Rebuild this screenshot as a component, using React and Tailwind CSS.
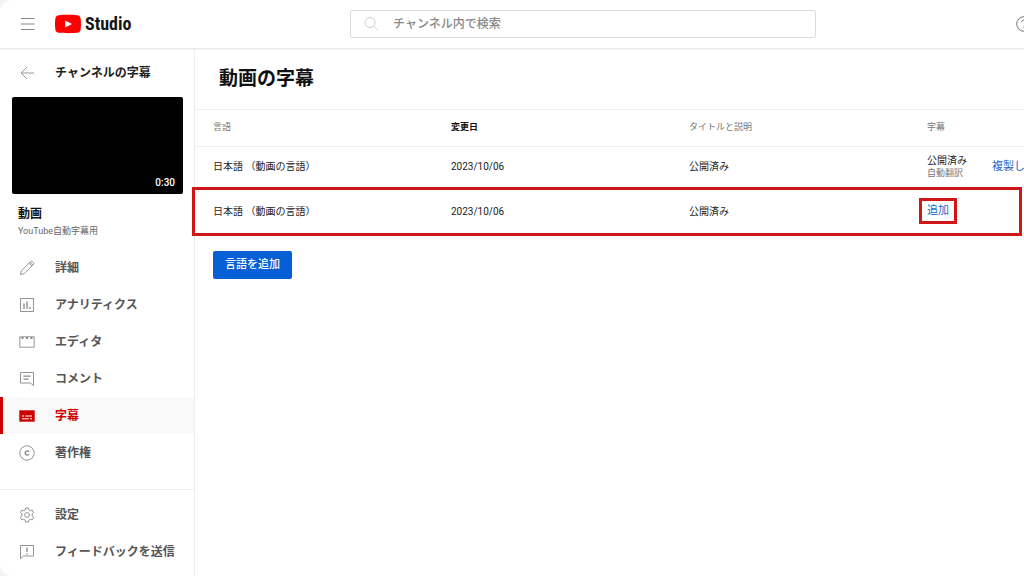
import clsx from "clsx";

const svgProps = { width: 16, height: 16, viewBox: "0 0 16 16", fill: "none", stroke: "currentColor", strokeWidth: 1, "aria-hidden": true };

const MenuIcon = () => (
  <svg {...svgProps}><path d="M1 2.5h13.5M1 8h13.5M1 13.5h13.5" strokeWidth={1.2} /></svg>
);

const BackIcon = () => (
  <svg {...svgProps}><path d="M15 8H2M8 2L2 8l6 6" /></svg>
);

const SearchIcon = () => (
  <svg {...svgProps}><circle cx="7" cy="6.5" r="5" /><path d="M10.6 10.1l4.4 4.4" /></svg>
);

const HelpIcon = () => (
  <svg {...svgProps}>
    <circle cx="8" cy="8" r="7.3" />
    <path d="M5.7 6.2c0-1.3 1-2.2 2.3-2.2s2.3.9 2.3 2.1c0 1.6-2.3 1.7-2.3 3.4M8 11v1.2" />
  </svg>
);

const PencilIcon = () => (
  <svg {...svgProps} strokeWidth={0.9}>
    <path d="M1.5 14.5l.8-3.6L11.6 1.6a1.3 1.3 0 0 1 1.8 0l1 1a1.3 1.3 0 0 1 0 1.8L5.1 13.7zM10 3.2L12.8 6M11 2.2L13.8 5" />
  </svg>
);

const AnalyticsIcon = () => (
  <svg {...svgProps}>
    <path d="M1.5 1.5h13v13h-13z" strokeWidth={0.9} />
    <path d="M5 6.5V12M8 4.5V12M11 10v2" strokeWidth={1.3} />
  </svg>
);

const EditorIcon = () => (
  <svg {...svgProps}>
    <path d="M.8 2.8h14.4v10.4H.8z" strokeWidth={0.9} />
    <path d="M2.5 4h2M7 4h2M11.5 4h2" strokeWidth={2} />
  </svg>
);

const CommentIcon = () => (
  <svg {...svgProps}>
    <path d="M1.5 1.5h13v13L11.5 12h-10z" strokeWidth={0.9} />
    <path d="M4.5 5.2h7M4.5 8.2h5" strokeWidth={1.2} />
  </svg>
);

const SubtitlesIcon = () => (
  <svg {...svgProps}>
    <path d="M.3 2.3h15.4v11.4H.3z" fill="currentColor" stroke="none" />
    <path d="M3 8h2M6.2 8H13M3 10.8h6.800M11 10.800h2" stroke="#fff" />
  </svg>
);

const CopyrightIcon = () => (
  <svg {...svgProps}>
    <circle cx="8" cy="8" r="7.2" strokeWidth={0.9} />
    <path d="M10 6.8a2.1 2.1 0 1 0 0 2.4" strokeWidth={1.4} />
  </svg>
);

const SettingsIcon = () => (
  <svg {...svgProps} strokeWidth={0.9}>
    <circle cx="8" cy="8" r="2.4" />
    <path d="M6.6 1h2.8l.4 1.9 1.5.9 1.9-.7 1.4 2.4L13.1 7v2l1.5 1.5-1.4 2.4-1.9-.7-1.5.9-.4 1.9H6.6l-.4-1.9-1.5-.9-1.9.7-1.4-2.4L2.9 9V7L1.4 5.5l1.4-2.4 1.9.7 1.5-.9z" strokeLinejoin="round" />
  </svg>
);

const FeedbackIcon = () => (
  <svg {...svgProps}>
    <path d="M1.5 1.5h13V12h-10l-3 2.8z" strokeWidth={0.9} />
    <path d="M8 3.5V8M8 9.2v1.3" strokeWidth={1.3} />
  </svg>
);

const PlayLogo = () => (
  <svg width="26" height="20" viewBox="0 0 26 20" aria-hidden="true">
    <path d="M4 1.2C9 .7 17 .7 22 1.2c2.2.2 3.5 1.4 3.7 3.6.4 3.4.4 7 0 10.4-.2 2.2-1.5 3.4-3.7 3.6-5 .5-13 .5-18 0C1.8 18.6.5 17.4.3 15.2c-.4-3.4-.4-7 0-10.4C.5 2.6 1.8 1.4 4 1.2z" fill="#f00" />
    <path d="M10.2 6.6v6.8L17 10z" fill="#fff" />
  </svg>
);

const mainNav = [
  { label: "詳細", icon: PencilIcon },
  { label: "アナリティクス", icon: AnalyticsIcon },
  { label: "エディタ", icon: EditorIcon },
  { label: "コメント", icon: CommentIcon },
  { label: "字幕", icon: SubtitlesIcon, active: true },
  { label: "著作権", icon: CopyrightIcon },
];

const footerNav = [
  { label: "設定", icon: SettingsIcon },
  { label: "フィードバックを送信", icon: FeedbackIcon },
];

const NavItem = ({ label, icon: Icon, active }) => (
  <li>
    <a
      href="#"
      aria-current={active ? "page" : undefined}
      className={clsx(
        "flex h-[37px] items-center gap-5 border-l-3 pl-4 text-xs font-bold whitespace-nowrap",
        active ? "border-[#cc0000] bg-[#f9f9f9] text-[#cc0000]" : "border-transparent text-[#555]"
      )}
    >
      <span className={active ? "text-[#cc0000]" : "text-[#888]"}><Icon /></span>
      {label}
    </a>
  </li>
);

const Header = () => (
  <header className="relative flex h-[49px] items-center border-b border-[#e8e8e8] shadow-xs">
    <div className="flex w-[350px] shrink-0 items-center gap-[19px] pl-5">
      <button type="button" aria-label="メニュー" className="text-[#888]"><MenuIcon /></button>
      <a href="#" className="flex items-center gap-1">
        <PlayLogo />
        <span className="font-['Roboto_Condensed','Liberation_Sans_Narrow','Roboto'] text-lg leading-6 font-bold text-[#161616]">Studio</span>
      </a>
    </div>
    <label className="flex h-7 flex-1 items-center gap-3.5 rounded-xs border border-[#dcdcdc] pl-3 text-[#ccc]">
      <SearchIcon />
      <input
        type="search"
        aria-label="チャンネル内で検索"
        placeholder="チャンネル内で検索"
        className="min-w-0 flex-1 bg-transparent text-xs font-medium text-[#333] outline-none placeholder:text-[#888]"
      />
    </label>
    <div className="flex w-[208px] shrink-0 justify-end">
      <button type="button" aria-label="ヘルプ" className="-mr-2 text-[#777]"><HelpIcon /></button>
    </div>
  </header>
);

const Sidebar = () => (
  <aside className="flex w-[195px] shrink-0 flex-col border-r border-[#efefef]">
    <a href="#" className="flex h-12 items-center gap-5 pl-[19px] text-xs font-bold text-[#222]">
      <span className="text-[#999]"><BackIcon /></span>
      チャンネルの字幕
    </a>
    <div className="mr-[11px] ml-3 flex h-[97px] items-end justify-end rounded-xs bg-black px-2 py-1">
      <span className="text-[10px] font-medium text-white">0:30</span>
    </div>
    <div className="px-[18px] pt-[11px]">
      <h2 className="text-xs leading-[18px] font-bold text-[#111]">動画</h2>
      <p className="text-[9px] leading-4 text-[#666]">YouTube自動字幕用</p>
    </div>
    <ul className="mt-2.5">
      {mainNav.map((item) => <NavItem key={item.label} {...item} />)}
    </ul>
    <ul className="mt-auto border-t border-[#efefef] pt-1.5 pb-1.5">
      {footerNav.map((item) => <NavItem key={item.label} {...item} />)}
    </ul>
  </aside>
);

const Captions = () => (
  <main className="min-w-0 flex-1">
    <h1 className="flex h-15 items-center pl-6 text-[19px] font-bold text-[#111]">動画の字幕</h1>
    <table className="w-full table-fixed border-collapse text-left text-[10px] whitespace-nowrap text-[#222]">
      <thead className="border-y border-[#efefef] text-[9px] text-[#777]">
        <tr className="h-[37px]">
          <th scope="col" className="w-[256px] pl-[18px] font-normal">言語</th>
          <th scope="col" className="w-[238px] font-bold text-[#111]">変更日</th>
          <th scope="col" className="w-[238px] font-normal">タイトルと説明</th>
          <th scope="col" className="font-normal">字幕</th>
        </tr>
      </thead>
      <tbody>
        <tr className="h-10">
          <td className="pl-[18px]">日本語 （動画の言語）</td>
          <td>2023/10/06</td>
          <td>公開済み</td>
          <td>
            <div className="flex items-center gap-[25px]">
              <div className="leading-[13px]">
                <div>公開済み</div>
                <div className="text-[9px] text-[#777]">自動翻訳</div>
              </div>
              <a href="#" className="text-[11px] text-[#1a66cc]">複製し</a>
            </div>
          </td>
        </tr>
        <tr className="relative h-[49px]">
          <td className="pl-[18px]">
            日本語 （動画の言語）
            <span className="pointer-events-none absolute inset-y-0 right-0.5 -left-[3px] border-3 border-[#d01616]" />
          </td>
          <td>2023/10/06</td>
          <td>公開済み</td>
          <td>
            <a href="#" className="-ml-2 inline-block border-3 border-[#d01616] px-[5px] py-0.5 text-[11px] text-[#1a66cc]">追加</a>
          </td>
        </tr>
      </tbody>
    </table>
    <button type="button" className="mt-[15px] ml-[18px] h-7 rounded-xs bg-[#065fd4] px-3 pt-0.5 text-[11px] font-medium text-white">
      言語を追加
    </button>
  </main>
);

const App = () => (
  <div className="bg-[#f4f4f4]">
    <div className="flex min-h-screen flex-col overflow-hidden rounded-l-xl bg-white font-['Roboto','Noto_Sans_CJK_JP',sans-serif]">
      <Header />
      <div className="flex flex-1">
        <Sidebar />
        <Captions />
      </div>
    </div>
  </div>
);

export default App;
